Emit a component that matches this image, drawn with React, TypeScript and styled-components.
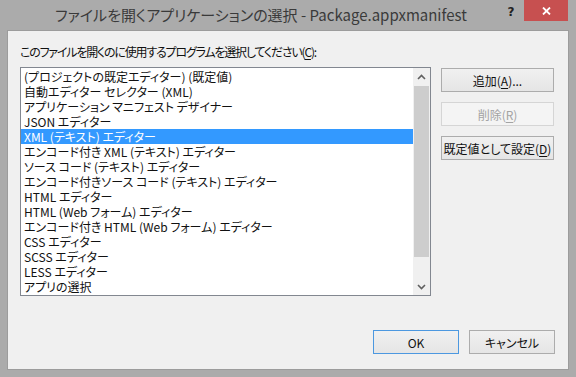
import React from "react";
import styled, { createGlobalStyle } from "styled-components";

const GlobalStyle = createGlobalStyle`
  html, body { margin: 0; padding: 0; }
  body {
    width: 576px;
    height: 377px;
    overflow: hidden;
    background: #ababab;
    font-family: "Noto Sans CJK JP", "Noto Sans", sans-serif;
    font-feature-settings: "palt" 1;
  }
`;

const Window = styled.div`
  width: 576px;
  height: 377px;
  display: flex;
  flex-direction: column;
  background: #ababab;
  box-sizing: border-box;
`;

const TitleBar = styled.div`
  height: 30px;
  display: flex;
  align-items: flex-start;
  flex-shrink: 0;
`;

const Title = styled.div`
  flex: 1;
  padding-left: 24px;
  text-align: center;
  font-size: 15px;
  line-height: 30px;
  color: #3a3a3a;
  white-space: nowrap;
`;

const HelpButton = styled.div`
  width: 26px;
  height: 21px;
  display: flex;
  align-items: center;
  justify-content: center;
  font-family: "DejaVu Sans", sans-serif;
  font-weight: bold;
  font-size: 12px;
  color: #222;
  padding-top: 3px;
  box-sizing: border-box;
`;

const CloseButton = styled.div`
  width: 44px;
  height: 21px;
  margin-right: 8px;
  background: #c75050;
  display: flex;
  align-items: center;
  justify-content: center;
`;

const Client = styled.div`
  flex: 1;
  margin: 0 7px 7px;
  border: 1px solid #9c9c9c;
  background: #f0f0f0;
  display: flex;
  flex-direction: column;
  padding: 13px 13px 15px 12px;
  min-height: 0;
`;

const Label = styled.div`
  height: 16px;
  line-height: 16px;
  font-size: 12px;
  letter-spacing: -1.2px;
  color: #111;
  margin-bottom: 7px;
  white-space: nowrap;
`;

const Key = styled.span`
  text-decoration: underline;
  text-underline-offset: 2px;
`;

const MainRow = styled.div`
  display: flex;
  gap: 10px;
  align-items: flex-start;
`;

const ListBox = styled.div`
  width: 411px;
  height: 229px;
  box-sizing: border-box;
  border: 1px solid #828790;
  background: #fff;
  display: flex;
`;

const Items = styled.div`
  flex: 1;
  padding-top: 1px;
  min-width: 0;
`;

const Item = styled.div<{ $selected?: boolean }>`
  height: 15px;
  line-height: 15px;
  font-size: 12px;
  padding-left: 3px;
  white-space: nowrap;
  overflow: hidden;
  color: ${(p) => (p.$selected ? "#fff" : "#111")};
  background: ${(p) => (p.$selected ? "#3399ff" : "transparent")};
`;

const ScrollBar = styled.div`
  width: 17px;
  background: #f0f0f0;
  display: flex;
  flex-direction: column;
`;

const Arrow = styled.div`
  height: 17px;
  display: flex;
  align-items: center;
  justify-content: center;
  flex-shrink: 0;
`;

const Track = styled.div`
  flex: 1;
  padding: 1px 1px 21px;
  display: flex;
`;

const Thumb = styled.div`
  flex: 1;
  background: #cdcdcd;
`;

const SideButtons = styled.div`
  display: flex;
  flex-direction: column;
  gap: 10px;
  padding-top: 1px;
`;

const Button = styled.div<{ $width: number; $default?: boolean; $disabled?: boolean }>`
  width: ${(p) => p.$width}px;
  height: 24px;
  box-sizing: border-box;
  display: flex;
  align-items: center;
  justify-content: center;
  font-size: 12px;
  white-space: nowrap;
  color: ${(p) => (p.$disabled ? "#a3a3a3" : "#111")};
  border: 1px solid
    ${(p) => (p.$default ? "#4c98e0" : p.$disabled ? "#d5d5d5" : "#acacac")};
  background: ${(p) =>
    p.$disabled
      ? "#f4f4f4"
      : "linear-gradient(#f0f0f0, #e5e5e5)"};
`;

const Footer = styled.div`
  margin-top: auto;
  display: flex;
  justify-content: flex-end;
  gap: 10px;
`;

const items = [
  "(プロジェクトの既定エディター) (既定値)",
  "自動エディター セレクター (XML)",
  "アプリケーション マニフェスト デザイナー",
  "JSON エディター",
  "XML (テキスト) エディター",
  "エンコード付き XML (テキスト) エディター",
  "ソース コード (テキスト) エディター",
  "エンコード付きソース コード (テキスト) エディター",
  "HTML エディター",
  "HTML (Web フォーム) エディター",
  "エンコード付き HTML (Web フォーム) エディター",
  "CSS エディター",
  "SCSS エディター",
  "LESS エディター",
  "アプリの選択",
];

const Chevron = ({ down }: { down?: boolean }) => (
  <svg width="9" height="6" viewBox="0 0 9 6">
    <path
      d={down ? "M1 1 L4.5 4.5 L8 1" : "M1 5 L4.5 1.5 L8 5"}
      fill="none"
      stroke="#606060"
      strokeWidth="1.6"
    />
  </svg>
);

export default function App() {
  return (
    <>
      <GlobalStyle />
      <Window>
        <TitleBar>
          <Title>ファイルを開くアプリケーションの選択 - Package.appxmanifest</Title>
          <HelpButton>?</HelpButton>
          <CloseButton>
            <svg width="9" height="8" viewBox="0 0 9 8">
              <path d="M1 0.5 L8 7.5 M8 0.5 L1 7.5" stroke="#fff" strokeWidth="1.8" />
            </svg>
          </CloseButton>
        </TitleBar>
        <Client>
          <Label>
            このファイルを開くのに使用するプログラムを選択してください(<Key>C</Key>):
          </Label>
          <MainRow>
            <ListBox>
              <Items>
                {items.map((t, i) => (
                  <Item key={i} $selected={i === 4}>
                    {t}
                  </Item>
                ))}
              </Items>
              <ScrollBar>
                <Arrow>
                  <Chevron />
                </Arrow>
                <Track>
                  <Thumb />
                </Track>
                <Arrow>
                  <Chevron down />
                </Arrow>
              </ScrollBar>
            </ListBox>
            <SideButtons>
              <Button $width={113}>
                追加(<Key>A</Key>)...
              </Button>
              <Button $width={113} $disabled>
                削除(<Key>R</Key>)
              </Button>
              <Button $width={113}>
                既定値として設定(<Key>D</Key>)
              </Button>
            </SideButtons>
          </MainRow>
          <Footer>
            <Button $width={86} $default>
              OK
            </Button>
            <Button $width={86}>キャンセル</Button>
          </Footer>
        </Client>
      </Window>
    </>
  );
}
